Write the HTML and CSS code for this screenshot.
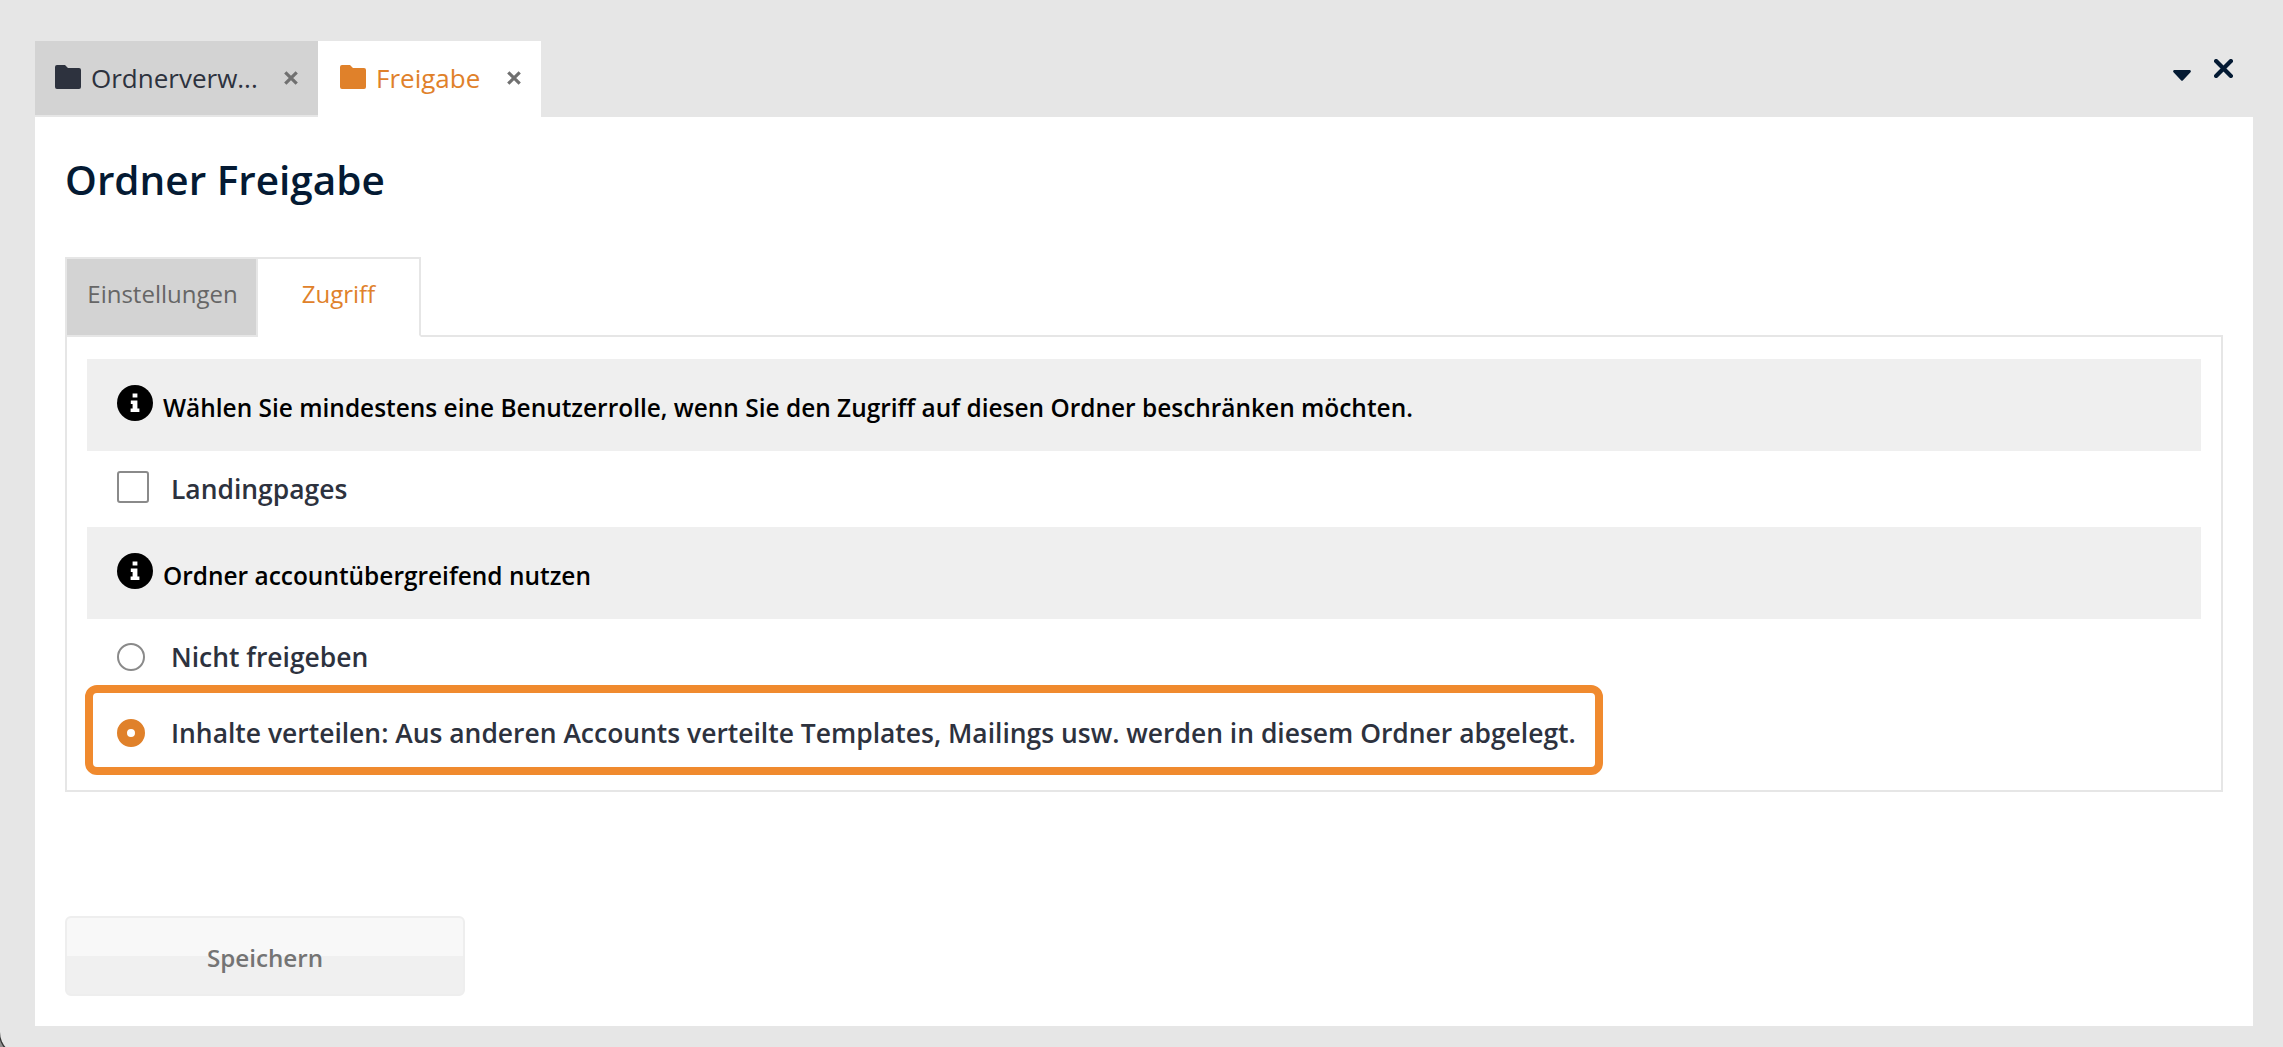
FILE: index.html

```html
<!DOCTYPE html>
<html lang="de">
<head>
    <meta charset="UTF-8">
    <title>Ordner Freigabe</title>
    <link rel="stylesheet" href="styles.css">
</head>
<body>
<div class="window">
    <div class="topbar">
        <div class="tab">
            <svg class="folder" viewBox="0 0 26 24"><path d="M2 0h8l3 3h11a2 2 0 0 1 2 2v17a2 2 0 0 1-2 2H2a2 2 0 0 1-2-2V2a2 2 0 0 1 2-2z"/></svg>
            <span class="tab-label">Ordnerverw...</span>
            <svg class="tab-close" viewBox="0 0 14 14"><path d="M2 2l10 10M12 2L2 12"/></svg>
        </div>
        <div class="tab tab-active">
            <svg class="folder" viewBox="0 0 26 24"><path d="M2 0h8l3 3h11a2 2 0 0 1 2 2v17a2 2 0 0 1-2 2H2a2 2 0 0 1-2-2V2a2 2 0 0 1 2-2z"/></svg>
            <span class="tab-label">Freigabe</span>
            <svg class="tab-close" viewBox="0 0 14 14"><path d="M2 2l10 10M12 2L2 12"/></svg>
        </div>
        <div class="window-actions">
            <svg class="caret" viewBox="0 0 18 11"><path d="M1.500 0h15a1.300 1.300 0 0 1 1 2.200L10 10.200a1.400 1.400 0 0 1-2 0L.5 2.200A1.300 1.300 0 0 1 1.500 0z"/></svg>
            <svg class="window-close" viewBox="0 0 18 18"><path d="M2 2l14 14M16 2L2 16"/></svg>
        </div>
    </div>

    <div class="panel">
        <h1>Ordner Freigabe</h1>

        <div class="subtabs">
            <div class="subtab">Einstellungen</div>
            <div class="subtab subtab-active">Zugriff</div>
        </div>

        <div class="box">
            <div class="info">
                <svg class="info-icon" viewBox="0 0 36 36"><circle cx="18" cy="18" r="18" fill="#000"/><path fill="#fff" d="M15.600 8.500h4.800v4h-4.800zM13.800 15.500h6.600v8h2v3.500h-8.800v-3.500h2v-4.500h-1.800z"/></svg>
                <span>Wählen Sie mindestens eine Benutzerrolle, wenn Sie den Zugriff auf diesen Ordner beschränken möchten.</span>
            </div>
            <div class="option option-check">
                <span class="checkbox"></span>
                <span>Landingpages</span>
            </div>
            <div class="info">
                <svg class="info-icon" viewBox="0 0 36 36"><circle cx="18" cy="18" r="18" fill="#000"/><path fill="#fff" d="M15.600 8.500h4.800v4h-4.800zM13.800 15.500h6.600v8h2v3.500h-8.800v-3.500h2v-4.500h-1.800z"/></svg>
                <span>Ordner accountübergreifend nutzen</span>
            </div>
            <div class="option option-radio">
                <span class="radio"></span>
                <span>Nicht freigeben</span>
            </div>
            <div class="option highlight">
                <span class="radio radio-on"></span>
                <span>Inhalte verteilen: Aus anderen Accounts verteilte Templates, Mailings usw. werden in diesem Ordner abgelegt.</span>
            </div>
        </div>

        <button class="save" type="button">Speichern</button>
    </div>
</div>
</body>
</html>
```

FILE: styles.css

```css
body {
    margin: 0;
    background-color: #8f8f8f;
    font-family: "Open Sans", "Noto Sans", sans-serif;
    overflow: hidden;
}
/* the window runs a little past the bottom of the shot, only its rounded corner shows */
.window {
    height: 1056px;
    box-sizing: border-box;
    padding: 41px 30px 30px 35px;
    background-color: #e6e6e6;
    border-bottom-left-radius: 24px;
    box-shadow: -1px 1px 0 #333;
    display: flex;
    flex-direction: column;
}
.topbar {
    display: flex;
    height: 76px;
    flex: none;
}
.tab {
    width: 283px;
    height: 74px;
    box-sizing: border-box;
    padding-left: 20px;
    display: flex;
    align-items: center;
    background-color: #d3d3d3;
    color: #2d323e;
}
.tab-active {
    width: 223px;
    height: 76px;
    padding-left: 22px;
    padding-bottom: 2px;
    background-color: #fff;
    color: #e0812a;
}
.folder {
    width: 26px;
    height: 24px;
    fill: currentColor;
    margin-right: 11px;
    margin-top: -3px;
    flex: none;
}
.tab-label {
    font-size: 26px;
    width: 192px;
    margin-left: -1px;
    white-space: nowrap;
}
.tab-active .tab-label {
    width: 129px;
    margin-left: -1px;
    margin-right: 1px;
}
.tab-close {
    width: 16px;
    height: 16px;
    fill: none;
    stroke: #707070;
    stroke-width: 2.8;
    flex: none;
}
.window-actions {
    margin-left: auto;
    display: flex;
    align-items: center;
    height: 56px;
    gap: 23px;
    padding-right: 20px;
}
.caret {
    width: 18px;
    height: 11px;
    fill: #041a33;
    margin-top: 12px;
}
.window-close {
    width: 19px;
    height: 19px;
    fill: none;
    stroke: #041a33;
    stroke-width: 4;
    stroke-linecap: round;
    margin-top: -2px;
}
.panel {
    flex: 1;
    background-color: #fff;
    padding: 0 30px;
    display: flex;
    flex-direction: column;
}
h1 {
    margin: 36px 0 0;
    height: 104px;
    font-size: 40.5px;
    line-height: 54px;
    font-weight: 600;
    color: #041a33;
}
.subtabs {
    display: flex;
    height: 80px;
    margin-bottom: -2px;
}
.subtab {
    width: 193px;
    box-sizing: border-box;
    border: 2px solid #e6e6e6;
    padding-bottom: 8px;
    background-color: #d3d3d3;
    color: #666;
    font-size: 24px;
    display: flex;
    align-items: center;
    justify-content: center;
}
.subtab:first-child {
    padding-left: 2px;
}
.subtab-active {
    width: 163px;
    border-left: 0;
    border-bottom-color: #fff;
    background-color: #fff;
    color: #e0812a;
    position: relative;
}
.box {
    height: 457px;
    box-sizing: border-box;
    border: 2px solid #e6e6e6;
    padding: 22px 20px 0;
}
.info {
    background-color: #efefef;
    height: 92px;
    box-sizing: border-box;
    padding: 26px 30px 0;
    display: flex;
    gap: 10px;
    color: #000;
    font-size: 24.45px;
    font-weight: 600;
    line-height: 36px;
    white-space: nowrap;
}
.info span {
    padding-top: 5px;
}
.info-icon {
    width: 36px;
    height: 36px;
    flex: none;
}
.option {
    display: flex;
    align-items: center;
    font-size: 26.45px;
    font-weight: 600;
    color: #2d323e;
    white-space: nowrap;
}
.option-check {
    height: 76px;
    padding-left: 30px;
}
.option-radio {
    height: 66px;
    box-sizing: border-box;
    padding-left: 30px;
    padding-top: 10px;
}
.highlight {
    width: 1518px;
    height: 90px;
    box-sizing: border-box;
    margin-left: -2px;
    padding-left: 24px;
    padding-top: 6px;
    border: 8px solid #f08a2e;
    border-radius: 12px;
}
.checkbox {
    width: 32px;
    height: 32px;
    box-sizing: border-box;
    border: 2px solid #8a8a8a;
    border-radius: 3px;
    margin-right: 22px;
    margin-top: -4px;
}
.radio {
    width: 28px;
    height: 28px;
    box-sizing: border-box;
    border: 2px solid #8a8a8a;
    border-radius: 50%;
    margin-right: 26px;
}
.radio-on {
    border: 10px solid #e0812a;
    background-color: #fff;
}
.save {
    margin-top: 124px;
    width: 400px;
    height: 80px;
    box-sizing: border-box;
    border: 2px solid #eeeeee;
    border-radius: 6px;
    background: linear-gradient(#f8f8f8 50%, #f0f0f0 50%);
    color: #747474;
    font-family: inherit;
    font-size: 24.2px;
    font-weight: 600;
    padding: 2px 0 0;
}
```
